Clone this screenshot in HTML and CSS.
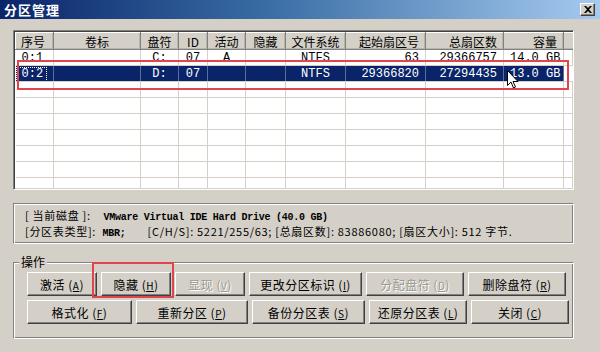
FILE: index.html
```html
<!DOCTYPE html>
<html lang="zh-CN">
<head>
    <meta charset="UTF-8">
    <title>分区管理</title>
    <link rel="stylesheet" href="styles.css">
</head>
<body>
    <div class="window">
        <header class="titlebar">
            <span class="title">分区管理</span>
            <span class="close-btn">
                <svg width="8" height="7" viewBox="0 0 8 7"><path d="M0 0h2l2 2 2-2h2L5 3.5 8 7H6L4 5 2 7H0l3-3.5z" fill="#000"/></svg>
            </span>
        </header>

        <div class="content">
            <!-- ===== PARTITION LIST ===== -->
            <div class="list">
                <table class="grid">
                    <colgroup>
                        <col style="width:38px"><col style="width:87px"><col style="width:38px"><col style="width:29px">
                        <col style="width:38px"><col style="width:40px"><col style="width:60px"><col style="width:80px">
                        <col style="width:78px"><col style="width:60px"><col>
                    </colgroup>
                    <thead>
                        <tr>
                            <th class="left">序号</th><th>卷标</th><th>盘符</th><th>ID</th><th>活动</th><th>隐藏</th>
                            <th>文件系统</th><th class="right">起始扇区号</th><th class="right">总扇区数</th><th class="right">容量</th><th></th>
                        </tr>
                    </thead>
                    <tbody>
                        <tr>
                            <td class="left">0:1</td><td></td><td>C:</td><td>07</td><td>A</td><td></td>
                            <td>NTFS</td><td class="right">63</td><td class="right">29366757</td><td class="right">14.0 GB</td><td></td>
                        </tr>
                        <tr class="selected">
                            <td class="left"><span class="focus">0:2</span></td><td></td><td>D:</td><td>07</td><td></td><td></td>
                            <td>NTFS</td><td class="right">29366820</td><td class="right">27294435</td><td class="right">13.0 GB</td><td class="blank"></td>
                        </tr>
                        <tr><td></td><td></td><td></td><td></td><td></td><td></td><td></td><td></td><td></td><td></td><td></td></tr>
                        <tr><td></td><td></td><td></td><td></td><td></td><td></td><td></td><td></td><td></td><td></td><td></td></tr>
                        <tr><td></td><td></td><td></td><td></td><td></td><td></td><td></td><td></td><td></td><td></td><td></td></tr>
                        <tr><td></td><td></td><td></td><td></td><td></td><td></td><td></td><td></td><td></td><td></td><td></td></tr>
                        <tr><td></td><td></td><td></td><td></td><td></td><td></td><td></td><td></td><td></td><td></td><td></td></tr>
                        <tr><td></td><td></td><td></td><td></td><td></td><td></td><td></td><td></td><td></td><td></td><td></td></tr>
                        <tr><td></td><td></td><td></td><td></td><td></td><td></td><td></td><td></td><td></td><td></td><td></td></tr>
                    </tbody>
                </table>
            </div>

            <!-- ===== DISK INFO ===== -->
            <div class="info">
                <div class="info-line">[&nbsp;当前磁盘&nbsp;]:&nbsp;&nbsp;&nbsp;&nbsp;<span class="mono">VMware Virtual IDE Hard Drive (40.0 GB)</span></div>
                <div class="info-line">[分区表类型]:&nbsp;&nbsp;<span class="mono">MBR;</span>&nbsp;&nbsp;&nbsp;&nbsp;&nbsp;&nbsp;&nbsp;[C/H/S]: 5221/255/63; [总扇区数]: 83886080; [扇区大小]: 512 字节.</div>
            </div>

            <!-- ===== OPERATIONS ===== -->
            <div class="ops">
                <span class="ops-label">操作</span>
                <div class="btn-row">
                    <button class="btn w70">激活 (<u>A</u>)</button>
                    <button class="btn w70">隐藏 (<u>H</u>)</button>
                    <button class="btn w70 disabled">显现 (<u>V</u>)</button>
                    <button class="btn w113">更改分区标识 (<u>I</u>)</button>
                    <button class="btn w98 disabled">分配盘符 (<u>D</u>)</button>
                    <button class="btn w98">删除盘符 (<u>R</u>)</button>
                </div>
                <div class="btn-row">
                    <button class="btn w105">格式化 (<u>F</u>)</button>
                    <button class="btn w112">重新分区 (<u>P</u>)</button>
                    <button class="btn w113">备份分区表 (<u>S</u>)</button>
                    <button class="btn w98">还原分区表 (<u>L</u>)</button>
                    <button class="btn w98">关闭 (<u>C</u>)</button>
                </div>
            </div>
        </div>

        <!-- annotation overlays -->
        <div class="mark mark-row"></div>
        <div class="mark mark-btn"></div>
        <svg class="cursor" width="12" height="19" viewBox="0 0 12 19">
            <path d="M0.5 0.5v15l3.5-3.5 2.5 6 2-1-2.5-5.5h5z" fill="#fff" stroke="#000" stroke-width="1"/>
        </svg>
    </div>
</body>
</html>
```

FILE: styles.css
```css
/* ===== BASE ===== */
* {
    margin: 0;
    padding: 0;
    box-sizing: border-box;
}

body {
    width: 600px;
    height: 352px;
    overflow: hidden;
    background: #d4d0c8;
    font-family: "Noto Sans CJK SC", "DejaVu Sans", sans-serif;
    font-size: 12px;
    color: #000;
}

.window {
    position: relative;
    width: 600px;
    height: 352px;
    background: #d4d0c8;
}

/* ===== TITLE BAR ===== */
.titlebar {
    height: 19px;
    display: flex;
    align-items: center;
    justify-content: space-between;
    padding: 0 5px 0 4px;
    background: linear-gradient(to right, #0a246a 0%, #3a6ea5 45%, #a6caf0 100%);
}

.title {
    color: #fff;
    font-weight: bold;
    font-size: 13px;
    letter-spacing: 1px;
}

.close-btn {
    width: 15px;
    height: 13px;
    display: flex;
    align-items: center;
    justify-content: center;
    background: #d4d0c8;
    border: 1px solid;
    border-color: #fff #404040 #404040 #fff;
    box-shadow: inset -1px -1px #808080;
}

.content {
    padding: 11px 13px 0 13px;
    width: 587px;
}

/* ===== LIST VIEW ===== */
.list {
    height: 160px;
    background: #fff;
    border: 1px solid;
    border-color: #808080 #fff #fff #808080;
    box-shadow: inset 1px 1px #404040, inset -1px -1px #d4d0c8;
    padding: 1px 0 0 1px;
    overflow: hidden;
}

.grid {
    width: 570px;
    table-layout: fixed;
    border-collapse: collapse;
}

.grid th {
    height: 17px;
    font-weight: normal;
    text-align: center;
    background: #d4d0c8;
    border: 1px solid;
    border-color: #fff #808080 #808080 #fff;
    box-shadow: inset -1px -1px #b8b4ac;
    padding: 0 4px;
    line-height: 15px;
    white-space: nowrap;
    overflow: hidden;
}

.grid th.left {
    padding-left: 5px;
}

.grid th.right {
    padding-right: 6px;
}

.grid td {
    height: 16px;
    text-align: center;
    border-right: 1px solid #d4d0c8;
    border-bottom: 1px solid #d4d0c8;
    padding: 0 6px;
    font-family: "Liberation Mono", monospace;
    font-size: 12px;
    line-height: 14px;
    white-space: nowrap;
    overflow: hidden;
}

.grid .left {
    text-align: left;
}

.grid .right {
    text-align: right;
}

.selected td {
    background: #0a246a;
    color: #fff;
    border-right-color: #5a6e9a;
}

.selected td.blank {
    background: #fff;
    border-right-color: #d4d0c8;
}

.focus {
    display: inline-block;
    outline: 1px dotted #fff;
    margin-left: -5px;
    padding: 0 3px 0 5px;
    line-height: 13px;
}

/* ===== INFO BOX ===== */
.info {
    margin-top: 13px;
    height: 41px;
    border: 1px solid;
    border-color: #808080 #fff #fff #808080;
    box-shadow: inset 1px 1px #fff, inset -1px -1px #808080;
    padding: 3px 0 0 11px;
    font-size: 11px;
    letter-spacing: 0.7px;
}

.info-line {
    height: 16px;
    line-height: 16px;
    white-space: nowrap;
    overflow: hidden;
}

.mono {
    font-family: "Liberation Mono", monospace;
    font-weight: bold;
    font-size: 10px;
    letter-spacing: -0.25px;
}

/* ===== OPERATIONS GROUP ===== */
.ops {
    position: relative;
    margin-top: 18px;
    height: 77px;
    border: 1px solid;
    border-color: #808080 #fff #fff #808080;
    box-shadow: inset 1px 1px #fff, inset -1px -1px #808080;
    padding: 9px 0 0 13px;
    display: flex;
    flex-direction: column;
    gap: 4px;
}

.ops-label {
    position: absolute;
    top: -9px;
    left: 5px;
    padding: 0 2px;
    background: #d4d0c8;
    line-height: 16px;
}

.btn-row {
    display: flex;
    gap: 4px;
}

.btn {
    height: 24px;
    font-family: inherit;
    font-size: 12px;
    background: #d4d0c8;
    color: #000;
    border: 1px solid;
    border-color: #fff #404040 #404040 #fff;
    box-shadow: inset -1px -1px #808080;
    letter-spacing: 0.5px;
}

.btn u {
    font-size: 10px;
}

.btn.disabled {
    color: #9a9890;
    text-shadow: 1px 1px #fff;
}

.w70 { width: 70px; }
.w98 { width: 98px; }
.w105 { width: 105px; }
.w112 { width: 112px; }
.w113 { width: 113px; }

/* ===== ANNOTATIONS ===== */
.mark {
    position: absolute;
    border: 2px solid #e0444c;
}

.mark-row {
    left: 17px;
    top: 60px;
    width: 552px;
    height: 30px;
}

.mark-btn {
    left: 92px;
    top: 262px;
    width: 82px;
    height: 36px;
}

.cursor {
    position: absolute;
    left: 507px;
    top: 70px;
}
```
